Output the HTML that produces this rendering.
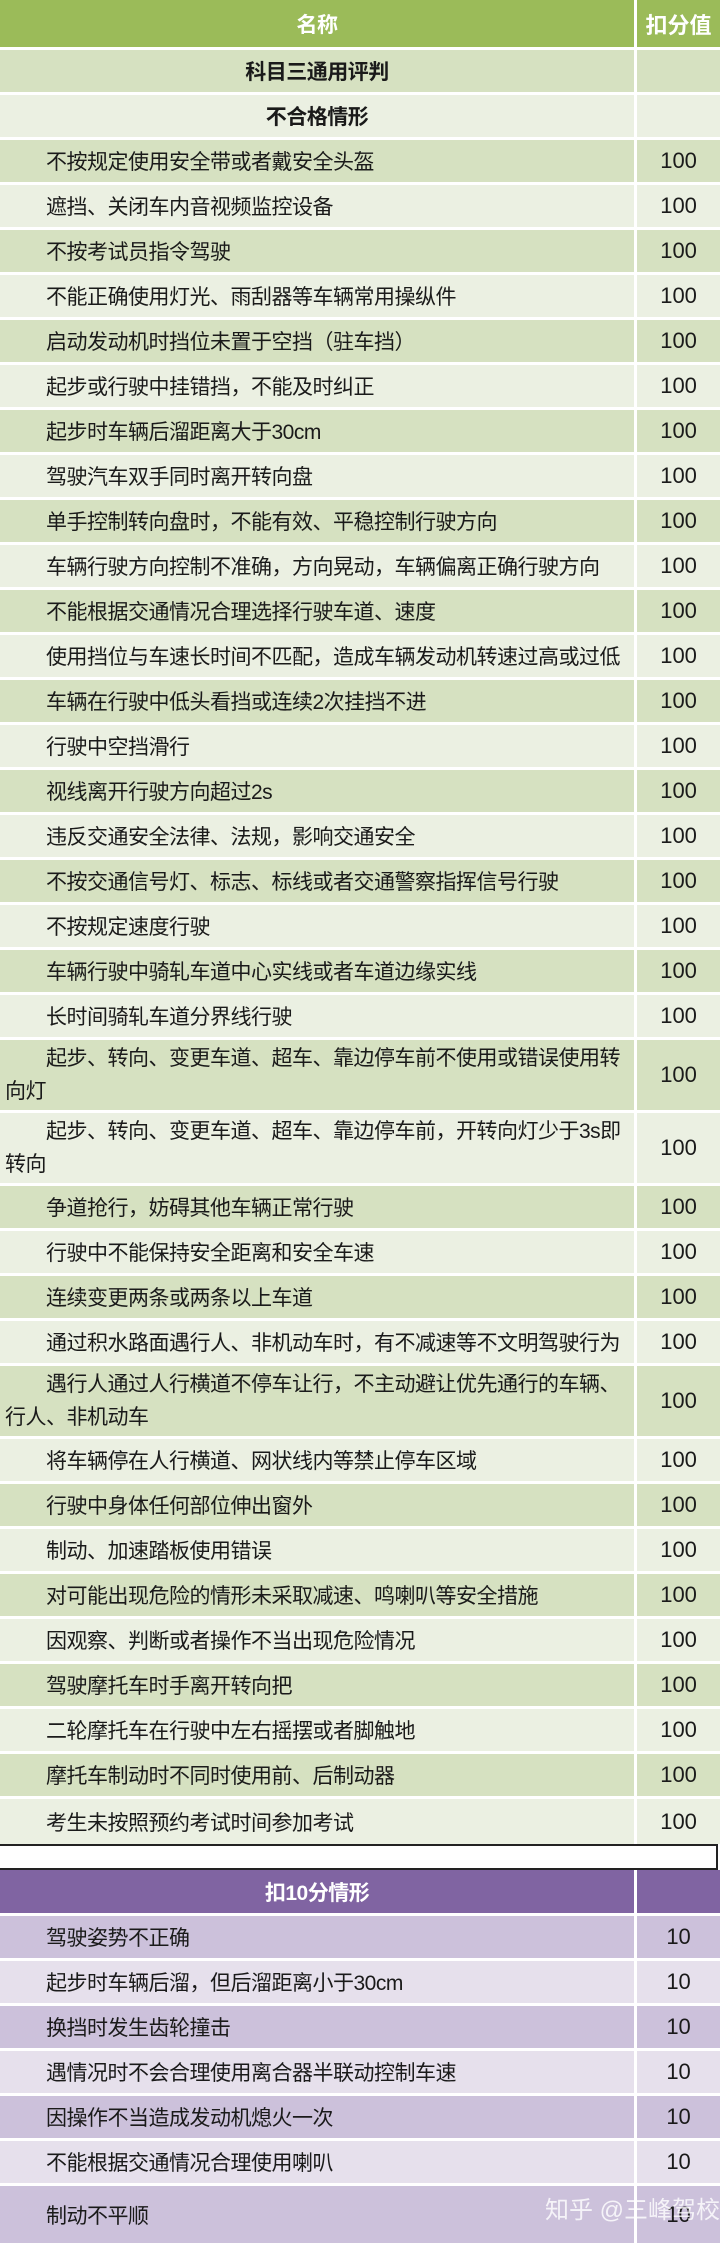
<!DOCTYPE html>
<html><head><meta charset="utf-8"><style>
*{margin:0;padding:0;box-sizing:border-box}
body{width:720px;height:2230px;background:#fff;font-family:"Liberation Sans","Noto Sans CJK SC",sans-serif;overflow:hidden;position:relative}
.r{display:flex;border-bottom:3px solid #fff;height:45px}
.r .a{width:635px;padding-left:46px;font-size:21px;color:#1a1a1a;display:flex;align-items:center;letter-spacing:-0.5px}
.r .b{width:83px;margin-left:3px;font-size:22px;color:#1a1a1a;display:flex;align-items:center;justify-content:center}
.d .a,.d .b{background:#d6e1c1}
.l .a,.l .b{background:#ebf0e2}
.t{height:73px}
.t .a{padding-left:5px;line-height:33px}
.t .a span{display:block}
.h{height:50px}
.h .a,.h .b{background:#9bbb59;color:#fff;font-weight:bold;justify-content:center;padding-left:0}
.s .a{justify-content:center;padding-left:0;font-weight:bold}
.p .a,.p .b{background:#ccc1db}
.q .a,.q .b{background:#e6e0ec}
.ph .a,.ph .b{background:#8064a2;color:#fff;font-weight:bold}
.ph .a{justify-content:center;padding-left:0}
.gap{height:26px;border-top:2px solid #222;border-bottom:2px solid #222;border-right:2px solid #222;width:718px}
.wm{position:absolute;left:545px;top:2190px;font-size:24px;color:rgba(255,255,255,0.8);white-space:nowrap}
</style></head><body>
<div class="r h"><div class="a">名称</div><div class="b">扣分值</div></div>
<div class="r d s"><div class="a">科目三通用评判</div><div class="b"></div></div>
<div class="r l s"><div class="a">不合格情形</div><div class="b"></div></div>
<div class="r d"><div class="a">不按规定使用安全带或者戴安全头盔</div><div class="b">100</div></div>
<div class="r l"><div class="a">遮挡、关闭车内音视频监控设备</div><div class="b">100</div></div>
<div class="r d"><div class="a">不按考试员指令驾驶</div><div class="b">100</div></div>
<div class="r l"><div class="a">不能正确使用灯光、雨刮器等车辆常用操纵件</div><div class="b">100</div></div>
<div class="r d"><div class="a">启动发动机时挡位未置于空挡（驻车挡）</div><div class="b">100</div></div>
<div class="r l"><div class="a">起步或行驶中挂错挡，不能及时纠正</div><div class="b">100</div></div>
<div class="r d"><div class="a">起步时车辆后溜距离大于30cm</div><div class="b">100</div></div>
<div class="r l"><div class="a">驾驶汽车双手同时离开转向盘</div><div class="b">100</div></div>
<div class="r d"><div class="a">单手控制转向盘时，不能有效、平稳控制行驶方向</div><div class="b">100</div></div>
<div class="r l"><div class="a">车辆行驶方向控制不准确，方向晃动，车辆偏离正确行驶方向</div><div class="b">100</div></div>
<div class="r d"><div class="a">不能根据交通情况合理选择行驶车道、速度</div><div class="b">100</div></div>
<div class="r l"><div class="a">使用挡位与车速长时间不匹配，造成车辆发动机转速过高或过低</div><div class="b">100</div></div>
<div class="r d"><div class="a">车辆在行驶中低头看挡或连续2次挂挡不进</div><div class="b">100</div></div>
<div class="r l"><div class="a">行驶中空挡滑行</div><div class="b">100</div></div>
<div class="r d"><div class="a">视线离开行驶方向超过2s</div><div class="b">100</div></div>
<div class="r l"><div class="a">违反交通安全法律、法规，影响交通安全</div><div class="b">100</div></div>
<div class="r d"><div class="a">不按交通信号灯、标志、标线或者交通警察指挥信号行驶</div><div class="b">100</div></div>
<div class="r l"><div class="a">不按规定速度行驶</div><div class="b">100</div></div>
<div class="r d"><div class="a">车辆行驶中骑轧车道中心实线或者车道边缘实线</div><div class="b">100</div></div>
<div class="r l"><div class="a">长时间骑轧车道分界线行驶</div><div class="b">100</div></div>
<div class="r d t"><div class="a"><div><span style="padding-left:41px">起步、转向、变更车道、超车、靠边停车前不使用或错误使用转</span><span>向灯</span></div></div><div class="b">100</div></div>
<div class="r l t"><div class="a"><div><span style="padding-left:41px">起步、转向、变更车道、超车、靠边停车前，开转向灯少于3s即</span><span>转向</span></div></div><div class="b">100</div></div>
<div class="r d"><div class="a">争道抢行，妨碍其他车辆正常行驶</div><div class="b">100</div></div>
<div class="r l"><div class="a">行驶中不能保持安全距离和安全车速</div><div class="b">100</div></div>
<div class="r d"><div class="a">连续变更两条或两条以上车道</div><div class="b">100</div></div>
<div class="r l"><div class="a">通过积水路面遇行人、非机动车时，有不减速等不文明驾驶行为</div><div class="b">100</div></div>
<div class="r d t"><div class="a"><div><span style="padding-left:41px">遇行人通过人行横道不停车让行，不主动避让优先通行的车辆、</span><span>行人、非机动车</span></div></div><div class="b">100</div></div>
<div class="r l"><div class="a">将车辆停在人行横道、网状线内等禁止停车区域</div><div class="b">100</div></div>
<div class="r d"><div class="a">行驶中身体任何部位伸出窗外</div><div class="b">100</div></div>
<div class="r l"><div class="a">制动、加速踏板使用错误</div><div class="b">100</div></div>
<div class="r d"><div class="a">对可能出现危险的情形未采取减速、鸣喇叭等安全措施</div><div class="b">100</div></div>
<div class="r l"><div class="a">因观察、判断或者操作不当出现危险情况</div><div class="b">100</div></div>
<div class="r d"><div class="a">驾驶摩托车时手离开转向把</div><div class="b">100</div></div>
<div class="r l"><div class="a">二轮摩托车在行驶中左右摇摆或者脚触地</div><div class="b">100</div></div>
<div class="r d"><div class="a">摩托车制动时不同时使用前、后制动器</div><div class="b">100</div></div>
<div class="r l" style="border-bottom:0"><div class="a">考生未按照预约考试时间参加考试</div><div class="b">100</div></div>
<div class="gap"></div>
<div class="r ph" style="height:46px"><div class="a">扣10分情形</div><div class="b"></div></div>
<div class="r p"><div class="a">驾驶姿势不正确</div><div class="b">10</div></div>
<div class="r q"><div class="a">起步时车辆后溜，但后溜距离小于30cm</div><div class="b">10</div></div>
<div class="r p"><div class="a">换挡时发生齿轮撞击</div><div class="b">10</div></div>
<div class="r q"><div class="a">遇情况时不会合理使用离合器半联动控制车速</div><div class="b">10</div></div>
<div class="r p"><div class="a">因操作不当造成发动机熄火一次</div><div class="b">10</div></div>
<div class="r q"><div class="a">不能根据交通情况合理使用喇叭</div><div class="b">10</div></div>
<div class="r p" style="height:60px"><div class="a">制动不平顺</div><div class="b">10</div></div>
<div class="wm">知乎 @三峰驾校</div>
</body></html>
